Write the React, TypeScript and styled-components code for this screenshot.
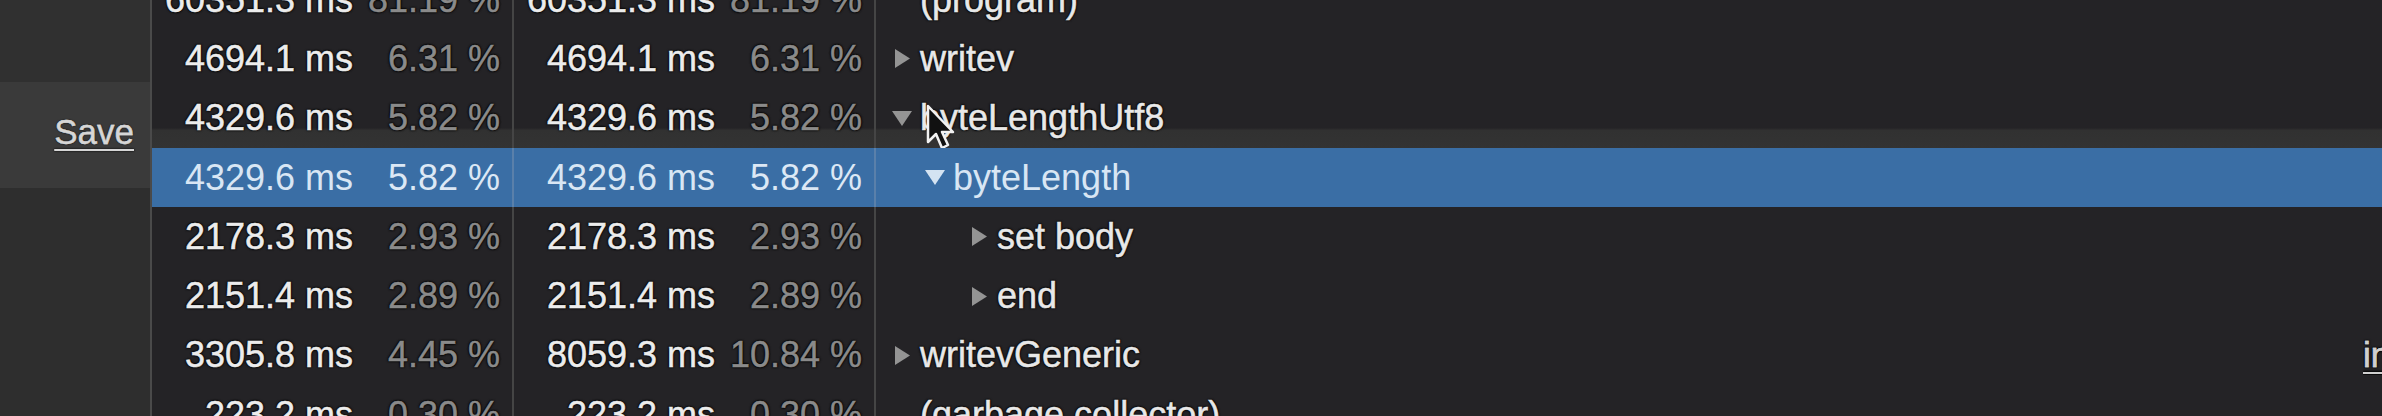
import React from "react";
import styled, { createGlobalStyle, css } from "styled-components";

const Global = createGlobalStyle`
  html, body {
    margin: 0;
    padding: 0;
    background: #242326;
    overflow: hidden;
  }
  #root {
    height: 416px;
  }
`;

const Page = styled.div`
  display: flex;
  height: 416px;
  overflow: hidden;
  font-family: "Liberation Sans", Arial, sans-serif;
  font-size: 36px;
  -webkit-font-smoothing: antialiased;
`;

const LeftPanel = styled.div`
  width: 150px;
  flex-shrink: 0;
  display: flex;
  flex-direction: column;
  background: #2e2e2e;
  border-right: 2px solid #4a4a4a;
`;

const PanelTop = styled.div`
  height: 82px;
  background: #303030;
`;

const PanelBand = styled.div`
  height: 106px;
  background: #3a3a3a;
  display: flex;
  align-items: center;
  justify-content: flex-end;
  padding: 0 16px 6px 0;
  box-sizing: border-box;
`;

const SaveLink = styled.span`
  color: #d6d6d6;
  font-size: 35px;
  text-decoration: underline;
  text-decoration-thickness: 2px;
  text-underline-offset: 5px;
  text-shadow: 0 0 2px #000;
  -webkit-text-stroke: 0.3px #d6d6d6;
`;

const Table = styled.div`
  flex: 1;
  display: flex;
  flex-direction: column;
  margin-top: -30px;
  background: #242326;
`;

const outline = css`
  text-shadow: 0 0 2px #000, 0 0 2px #000, 0 0 3px #000, 0 0 1px #000;
  -webkit-text-stroke: 0.5px currentColor;
`;

const Row = styled.div<{ $selected?: boolean; $hover?: boolean }>`
  display: grid;
  grid-template-columns: 362px 362px 1fr;
  height: 59.3px;
  flex-shrink: 0;
  white-space: nowrap;
  ${(p) =>
    p.$selected
      ? css`
          background: #3a6ea5;
        `
      : p.$hover
      ? css`
          background: linear-gradient(
            to bottom,
            transparent 0%,
            transparent 66%,
            #313131 70%,
            #333333 100%
          );
        `
      : ""}
`;

const TimeCell = styled.div<{ $selected?: boolean }>`
  display: flex;
  align-items: center;
  justify-content: flex-end;
  padding-right: 12px;
  border-right: 2px solid ${(p) => (p.$selected ? "#5a80aa" : "#454545")};
`;

const Ms = styled.span<{ $selected?: boolean }>`
  color: ${(p) => (p.$selected ? "#d8e6f4" : "#ececec")};
  ${(p) => (p.$selected ? "" : outline)}
`;

const Pct = styled.span<{ $selected?: boolean }>`
  width: 147px;
  text-align: right;
  color: ${(p) => (p.$selected ? "#dce8f5" : "#8a8a8a")};
  ${(p) => (p.$selected ? "" : outline)}
`;

const NameCell = styled.div<{ $indent: number }>`
  position: relative;
  display: flex;
  align-items: center;
  padding-left: ${(p) => 16 + p.$indent}px;
  overflow: hidden;
`;

const Toggle = styled.span`
  width: 20px;
  margin-right: 8px;
  flex-shrink: 0;
  display: flex;
  align-items: center;
  justify-content: center;
`;

const FnName = styled.span<{ $selected?: boolean }>`
  color: ${(p) => (p.$selected ? "#d8e6f4" : "#e8e8e8")};
  ${(p) => (p.$selected ? "" : outline)}
`;

const SourceLink = styled.span`
  margin-left: auto;
  width: 19px;
  flex-shrink: 0;
  overflow: hidden;
  color: #cfcfcf;
  font-size: 35px;
  text-decoration: underline;
  text-decoration-thickness: 2px;
  text-underline-offset: 5px;
  ${outline}
`;

const Cursor = styled.svg`
  position: absolute;
  left: 50px;
  top: 15px;
  width: 32px;
  height: 48px;
  pointer-events: none;
`;

type Tri = "right" | "down" | null;

interface RowData {
  self: string;
  selfPct: string;
  total: string;
  totalPct: string;
  name: string;
  indent: number;
  toggle: Tri;
  selected?: boolean;
  hover?: boolean;
  link?: string;
}

const rows: RowData[] = [
  { self: "60351.3 ms", selfPct: "81.19 %", total: "60351.3 ms", totalPct: "81.19 %", name: "(program)", indent: 0, toggle: null },
  { self: "4694.1 ms", selfPct: "6.31 %", total: "4694.1 ms", totalPct: "6.31 %", name: "writev", indent: 0, toggle: "right" },
  { self: "4329.6 ms", selfPct: "5.82 %", total: "4329.6 ms", totalPct: "5.82 %", name: "byteLengthUtf8", indent: 0, toggle: "down", hover: true },
  { self: "4329.6 ms", selfPct: "5.82 %", total: "4329.6 ms", totalPct: "5.82 %", name: "byteLength", indent: 33, toggle: "down", selected: true },
  { self: "2178.3 ms", selfPct: "2.93 %", total: "2178.3 ms", totalPct: "2.93 %", name: "set body", indent: 77, toggle: "right" },
  { self: "2151.4 ms", selfPct: "2.89 %", total: "2151.4 ms", totalPct: "2.89 %", name: "end", indent: 77, toggle: "right" },
  { self: "3305.8 ms", selfPct: "4.45 %", total: "8059.3 ms", totalPct: "10.84 %", name: "writevGeneric", indent: 0, toggle: "right", link: "internal/stream_base_commons.js:97" },
  { self: "223.2 ms", selfPct: "0.30 %", total: "223.2 ms", totalPct: "0.30 %", name: "(garbage collector)", indent: 0, toggle: null },
];

const Triangle: React.FC<{ dir: Tri; selected?: boolean }> = ({ dir, selected }) => {
  if (!dir) return null;
  const fill = selected ? "#d4e3f2" : "#949494";
  if (dir === "right") {
    return (
      <svg width="15" height="19" viewBox="0 0 15 19">
        <path d="M0 0 L15 9.5 L0 19 Z" fill={fill} />
      </svg>
    );
  }
  return (
    <svg width="20" height="15" viewBox="0 0 20 15">
      <path d="M0 0 L20 0 L10 15 Z" fill={fill} />
    </svg>
  );
};

const MouseCursor = () => (
  <Cursor viewBox="0 0 32 48">
    <path
      d="M2 2 L2 38 L10 30 L16 44 L22 41 L16 28 L27 28 Z"
      fill="#111"
      stroke="#f2f2f2"
      strokeWidth="2.5"
      strokeLinejoin="round"
    />
  </Cursor>
);

export default function App() {
  return (
    <>
      <Global />
      <Page>
        <LeftPanel>
          <PanelTop />
          <PanelBand>
            <SaveLink>Save</SaveLink>
          </PanelBand>
        </LeftPanel>
        <Table>
          {rows.map((r, i) => (
            <Row key={i} $selected={r.selected} $hover={r.hover}>
              <TimeCell $selected={r.selected}>
                <Ms $selected={r.selected}>{r.self}</Ms>
                <Pct $selected={r.selected}>{r.selfPct}</Pct>
              </TimeCell>
              <TimeCell $selected={r.selected}>
                <Ms $selected={r.selected}>{r.total}</Ms>
                <Pct $selected={r.selected}>{r.totalPct}</Pct>
              </TimeCell>
              <NameCell $indent={r.indent}>
                <Toggle>
                  <Triangle dir={r.toggle} selected={r.selected} />
                </Toggle>
                <FnName $selected={r.selected}>{r.name}</FnName>
                {r.link && <SourceLink>{r.link}</SourceLink>}
                {r.hover && <MouseCursor />}
              </NameCell>
            </Row>
          ))}
        </Table>
      </Page>
    </>
  );
}
